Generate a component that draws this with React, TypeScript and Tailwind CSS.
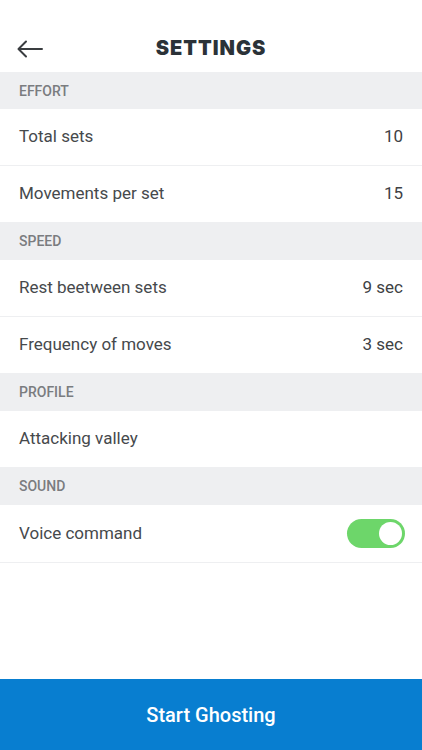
import React, { useState } from 'react';

interface Row {
  label: string;
  value?: string;
}

interface Section {
  title: string;
  rows: Row[];
}

const sections: Section[] = [
  {
    title: 'EFFORT',
    rows: [
      { label: 'Total sets', value: '10' },
      { label: 'Movements per set', value: '15' },
    ],
  },
  {
    title: 'SPEED',
    rows: [
      { label: 'Rest beetween sets', value: '9 sec' },
      { label: 'Frequency of moves', value: '3 sec' },
    ],
  },
  {
    title: 'PROFILE',
    rows: [{ label: 'Attacking valley' }],
  },
];

const App: React.FC = () => {
  const [voiceOn, setVoiceOn] = useState(true);

  return (
    <div
      className="w-[422px] h-[750px] bg-white flex flex-col overflow-hidden"
      style={{ fontFamily: 'Roboto, "Liberation Sans", sans-serif' }}
    >
      <div className="h-[72px] shrink-0 relative flex items-center justify-center">
        <button className="absolute left-[14px] top-[37px] p-0.5">
          <svg width="28" height="20" viewBox="0 0 28 20" fill="none">
            <path
              d="M26 10H3M10 2.5L2.5 10L10 17.5"
              stroke="#3a3d40"
              strokeWidth="2"
              strokeLinecap="round"
              strokeLinejoin="round"
            />
          </svg>
        </button>
        <h1
          className="mt-[24px] text-[20px] font-black tracking-[1px] text-[#2b3238]"
          style={{ fontFamily: 'Inter, "DejaVu Sans", sans-serif' }}
        >
          SETTINGS
        </h1>
      </div>

      <div className="flex-1 flex flex-col">
        {sections.map((section, si) => (
          <div key={section.title}>
            <div
              className={`${si === 0 ? 'h-[37px]' : 'h-[38px]'} bg-[#eeeff1] flex items-center px-[19px] pt-px`}
            >
              <span className="text-[14px] font-medium text-[#7a7c7f]">{section.title}</span>
            </div>
            {section.rows.map((row, i) => (
              <div
                key={row.label}
                className={`flex items-center justify-between pl-[19px] pr-[19px] ${
                  i < section.rows.length - 1 ? 'h-[57px] border-b border-[#eeeff1]' : 'h-[56px]'
                }`}
              >
                <span className="text-[17px] text-[#46494c]">{row.label}</span>
                {row.value && <span className="text-[17px] text-[#3e4144]">{row.value}</span>}
              </div>
            ))}
          </div>
        ))}
        <div>
          <div className="h-[38px] bg-[#eeeff1] flex items-center px-[19px] pt-px">
            <span className="text-[14px] font-medium text-[#7a7c7f]">SOUND</span>
          </div>
          <div className="h-[58px] flex items-center justify-between pl-[19px] pr-[17px] border-b border-[#eeeff1]">
            <span className="text-[17px] text-[#46494c]">Voice command</span>
            <button
              onClick={() => setVoiceOn((v) => !v)}
              className={`w-[58px] h-[29px] rounded-full p-[3px] flex items-center transition-colors ${
                voiceOn ? 'bg-[#6dd66a] justify-end' : 'bg-[#d5d7da] justify-start'
              }`}
            >
              <span className="w-[23px] h-[23px] rounded-full bg-white block" />
            </button>
          </div>
        </div>
      </div>

      <button className="h-[71px] shrink-0 bg-[#087ed0] text-white text-[20px] font-medium flex items-center justify-center">
        Start Ghosting
      </button>
    </div>
  );
};

export default App;
